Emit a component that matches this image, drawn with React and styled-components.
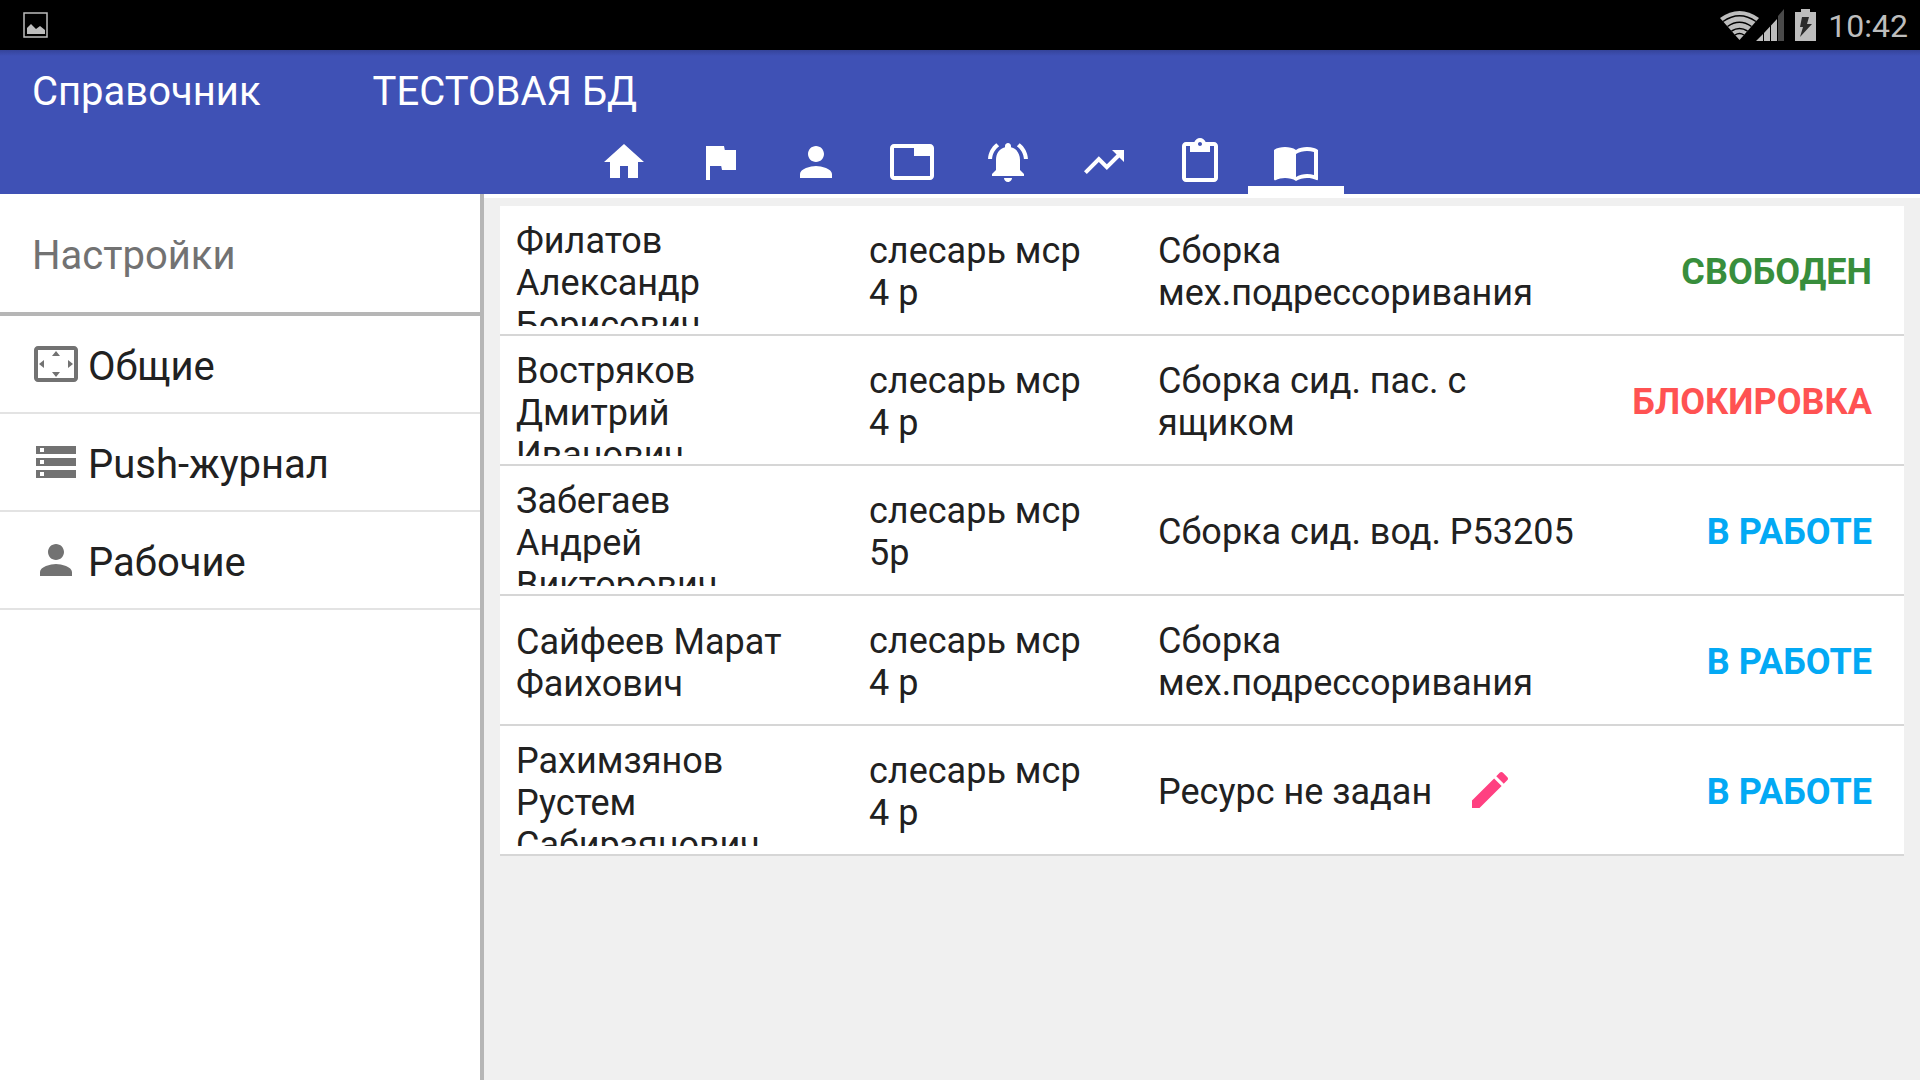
import React from 'react';
import styled, { createGlobalStyle } from 'styled-components';

const GlobalStyle = createGlobalStyle`
  * { box-sizing: border-box; }
  html, body, #root { margin: 0; height: 100%; }
  body {
    font-family: Roboto, "Noto Sans", sans-serif;
    color: #212121;
    background: #f0f0f0;
    overflow: hidden;
  }
`;

const Screen = styled.div`
  min-height: 100vh;
  display: flex;
  flex-direction: column;
`;

const StatusBar = styled.div`
  height: 50px;
  flex: none;
  display: flex;
  align-items: center;
  justify-content: space-between;
  padding: 0 12px 0 22px;
  background: #000;
  color: #bdbdbd;
`;

const StatusGroup = styled.div`
  display: flex;
  align-items: center;
`;

const Signals = styled.svg`
  display: block;
  margin-right: 10px;
`;

const Clock = styled.time`
  font-size: 32px;
  line-height: 40px;
  padding-top: 2px;
`;

const AppBar = styled.header`
  background: linear-gradient(#35449a, #3f51b5 6px);
  color: #fff;
  flex: none;
`;

const Titles = styled.div`
  display: flex;
  gap: 112px;
  height: 88px;
  padding: 18px 32px 0;
`;

const Title = styled.h1`
  margin: 0;
  font-size: 40px;
  line-height: 48px;
  font-weight: 400;
`;

const Tabs = styled.nav`
  display: flex;
  justify-content: center;
`;

const Tab = styled.button`
  width: 96px;
  padding: 0;
  border: 0;
  border-bottom: 8px solid ${(p) => (p.$active ? '#fff' : 'transparent')};
  background: none;
  color: inherit;
  display: flex;
  justify-content: center;
  cursor: pointer;
`;

const Glyph = styled.svg`
  display: block;
  width: 48px;
  height: 48px;
  flex: none;
  fill: currentColor;
`;

const Body = styled.div`
  flex: 1;
  display: flex;
`;

const Sidebar = styled.aside`
  width: 484px;
  flex: none;
  background: #fff;
  border-right: 4px solid #b6b6b6;
`;

const SidebarHeading = styled.h2`
  margin: 0;
  height: 122px;
  padding: 4px 32px 0;
  display: flex;
  align-items: center;
  border-bottom: 4px solid #b6b6b6;
  font-size: 40px;
  font-weight: 400;
  color: #727272;
`;

const SidebarItem = styled.button`
  width: 100%;
  height: 98px;
  padding: 0 32px;
  display: flex;
  align-items: center;
  gap: 8px;
  border: 0;
  border-bottom: 2px solid #e3e3e3;
  background: none;
  color: #727272;
  font: inherit;
  font-size: 40px;
  text-align: left;
  cursor: pointer;
`;

const SidebarLabel = styled.span`
  padding-top: 4px;
  color: #212121;
`;

const Main = styled.main`
  flex: 1;
  border-top: 4px solid #fff;
  padding: 8px 16px;
`;

const Table = styled.table`
  width: 100%;
  table-layout: fixed;
  border-collapse: separate;
  border-spacing: 0;
  background: #fff;
  font-size: 36px;
  line-height: 42px;
`;

const Column = styled.col`
  width: ${(p) => p.$width || 'auto'};
`;

const Cell = styled.td`
  height: 130px;
  padding: 4px 0 0;
  vertical-align: middle;
  border-bottom: 2px solid #d6d6d6;
`;

const NameCell = styled(Cell)`
  padding-left: 16px;
`;

const Name = styled.div`
  max-height: 108px;
  width: 280px;
  padding-top: 2px;
  overflow: hidden;
`;

const Role = styled.div`
  width: 240px;
`;

const Resource = styled.div`
  display: flex;
  align-items: center;
  gap: 34px;
  max-width: 430px;
`;

const EditButton = styled.button`
  padding: 0 0 4px;
  border: 0;
  background: none;
  color: #ff4081;
  cursor: pointer;
`;

const StateCell = styled(Cell)`
  padding-right: 32px;
  text-align: right;
  font-weight: 700;
  color: ${(p) => p.$color};
`;

const ICONS = {
  home: 'M10 20v-6h4v6h5v-8h3L12 3 2 12h3v8z',
  flag: 'M14.4 6L14 4H5v17h2v-7h5.6l.4 2h7V6z',
  person: 'M12 12c2.21 0 4-1.79 4-4s-1.79-4-4-4-4 1.79-4 4 1.79 4 4 4zm0 2c-2.67 0-8 1.34-8 4v2h16v-2c0-2.66-5.33-4-8-4z',
  tab: 'M21 3H3c-1.1 0-2 .9-2 2v14c0 1.1.9 2 2 2h18c1.1 0 2-.9 2-2V5c0-1.1-.9-2-2-2zm0 16H3V5h10v4h8v10z',
  bell: 'M7.58 4.08L6.15 2.65C3.75 4.48 2.17 7.3 2.03 10.5h2c.15-2.65 1.51-4.97 3.55-6.42zm12.39 6.42h2c-.15-3.2-1.73-6.02-4.12-7.85l-1.42 1.43c2.02 1.45 3.39 3.77 3.54 6.42zM18 11c0-3.07-1.64-5.64-4.5-6.32V4c0-.83-.67-1.5-1.5-1.5s-1.5.67-1.5 1.5v.68C7.63 5.36 6 7.92 6 11v5l-2 2v1h16v-1l-2-2v-5zm-6 11c.14 0 .27-.01.4-.04.65-.14 1.18-.58 1.44-1.18.1-.24.15-.5.15-.78h-4c.01 1.1.9 2 2.01 2z',
  trend: 'M16 6l2.29 2.29-4.88 4.88-4-4L2 16.59 3.41 18l6-6 4 4 6.3-6.29L22 12V6z',
  clipboard: 'M19 2h-4.18C14.4.84 13.3 0 12 0c-1.3 0-2.4.84-2.82 2H5c-1.1 0-2 .9-2 2v16c0 1.1.9 2 2 2h14c1.1 0 2-.9 2-2V4c0-1.1-.9-2-2-2zm-7 0c.55 0 1 .45 1 1s-.45 1-1 1-1-.45-1-1 .45-1 1-1zm7 18H5V4h2v3h10V4h2v16z',
  book: 'M21 5c-1.11-.35-2.33-.5-3.5-.5-1.95 0-4.05.4-5.5 1.5-1.45-1.1-3.55-1.5-5.5-1.5S2.45 4.9 1 6v14.65c0 .25.25.5.5.5.1 0 .15-.05.25-.05C3.1 20.45 5.05 20 6.5 20c1.95 0 4.05.4 5.5 1.5 1.35-.85 3.8-1.5 5.5-1.5 1.65 0 3.35.3 4.75 1.05.1.05.15.05.25.05.25 0 .5-.25.5-.5V6c-.6-.45-1.25-.75-2-1zm0 13.5c-1.1-.35-2.3-.5-3.5-.5-1.7 0-4.15.65-5.5 1.5V8c1.35-.85 3.8-1.5 5.5-1.5 1.2 0 2.4.15 3.5.5v11.5z',
  overscan: 'M12.01 5.5L10 8h4l-1.99-2.5zM18 10v4l2.5-1.99L18 10zM6 10l-2.5 2.01L6 14v-4zm8 6h-4l2.01 2.5L14 16zm7-13H3c-1.1 0-2 .9-2 2v14c0 1.1.9 2 2 2h18c1.1 0 2-.9 2-2V5c0-1.1-.9-2-2-2zm0 16.01H3V4.99h18v14.02z',
  storage: 'M2 20h20v-4H2v4zm2-3h2v2H4v-2zM2 4v4h20V4H2zm4 3H4V5h2v2zm-4 7h20v-4H2v4zm2-3h2v2H4v-2z',
  pencil: 'M3 17.25V21h3.75L17.81 9.94l-3.75-3.75L3 17.25zM20.71 7.04c.39-.39.39-1.02 0-1.41l-2.34-2.34c-.39-.39-1.02-.39-1.41 0l-1.83 1.83 3.75 3.75 1.83-1.83z',
};

const Icon = ({ name }) => (
  <Glyph viewBox="0 0 24 24" aria-hidden="true">
    <path d={ICONS[name]} />
  </Glyph>
);

const TABS = [
  ['home', 'Главная'],
  ['flag', 'Задания'],
  ['person', 'Персонал'],
  ['tab', 'Вкладки'],
  ['bell', 'Уведомления'],
  ['trend', 'Показатели'],
  ['clipboard', 'Отчёты'],
  ['book', 'Справочник'],
];

const MENU = [
  ['overscan', 'Общие'],
  ['storage', 'Push-журнал'],
  ['person', 'Рабочие'],
];

const FREE = { text: 'СВОБОДЕН', color: '#388e3c' };
const BLOCKED = { text: 'БЛОКИРОВКА', color: '#ff5252' };
const BUSY = { text: 'В РАБОТЕ', color: '#03a9f4' };

const WORKERS = [
  { name: 'Филатов Александр Борисович', role: 'слесарь мср 4 р', resource: 'Сборка мех.подрессоривания', state: FREE },
  { name: 'Востряков Дмитрий Иванович', role: 'слесарь мср 4 р', resource: 'Сборка сид. пас. с ящиком', state: BLOCKED },
  { name: 'Забегаев Андрей Викторович', role: 'слесарь мср 5р', resource: 'Сборка сид. вод. Р53205', state: BUSY },
  { name: 'Сайфеев Марат Фаихович', role: 'слесарь мср 4 р', resource: 'Сборка мех.подрессоривания', state: BUSY },
  { name: 'Рахимзянов Рустем Сабирзянович', role: 'слесарь мср 4 р', resource: null, state: BUSY },
];

export default function App() {
  return (
    <Screen>
      <GlobalStyle />
      <StatusBar>
        <svg width="28" height="30" viewBox="0 0 28 30" aria-hidden="true">
          <rect x="2" y="3" width="23" height="24" fill="none" stroke="#bdbdbd" strokeWidth="1.500" />
          <path d="M5 24v-6l4-4 5 5 4-3 5 4v4z" fill="#bdbdbd" />
        </svg>
        <StatusGroup>
          <Signals width="98" height="34" viewBox="1720 7 98 34" aria-hidden="true">
            <path d="M1739.500 39L1720 17Q1739.500 3 1759 17z" fill="#bdbdbd" />
            <path d="M1723 20.500Q1739.500 9 1756 20.500M1727.500 25.500Q1739.500 17 1751.500 25.500M1731.500 30Q1739.500 25 1747.500 30M1735 34Q1739.500 31 1744 34" fill="none" stroke="#000" strokeWidth="1.500" />
            <path d="M1756 40L1763 33V40zM1764 32L1770 25.500V40H1764zM1771 24.500L1777 18V40H1771z" fill="#bdbdbd" />
            <path d="M1778 15L1784 8V40H1778z" fill="#4a4a4a" />
            <path d="M1801 8h9v3h6v29h-21V11h6z" fill="#bdbdbd" />
            <path d="M1802 16h7l-2 7h5l-12 13 3-10h-3z" fill="#2a2a2a" />
          </Signals>
          <Clock>10:42</Clock>
        </StatusGroup>
      </StatusBar>
      <AppBar>
        <Titles>
          <Title>Справочник</Title>
          <Title as="div">ТЕСТОВАЯ БД</Title>
        </Titles>
        <Tabs>
          {TABS.map(([icon, label]) => (
            <Tab key={icon} aria-label={label} $active={icon === 'book'}>
              <Icon name={icon} />
            </Tab>
          ))}
        </Tabs>
      </AppBar>
      <Body>
        <Sidebar>
          <SidebarHeading>Настройки</SidebarHeading>
          {MENU.map(([icon, label]) => (
            <SidebarItem key={label}>
              <Icon name={icon} />
              <SidebarLabel>{label}</SidebarLabel>
            </SidebarItem>
          ))}
        </Sidebar>
        <Main>
          <Table>
            <colgroup>
              <Column $width="369px" />
              <Column $width="289px" />
              <Column />
              <Column $width="300px" />
            </colgroup>
            <tbody>
              {WORKERS.map((w) => (
                <tr key={w.name}>
                  <NameCell>
                    <Name>{w.name}</Name>
                  </NameCell>
                  <Cell>
                    <Role>{w.role}</Role>
                  </Cell>
                  <Cell>
                    <Resource>
                      {w.resource || 'Ресурс не задан'}
                      {!w.resource && (
                        <EditButton aria-label="Изменить">
                          <Icon name="pencil" />
                        </EditButton>
                      )}
                    </Resource>
                  </Cell>
                  <StateCell $color={w.state.color}>{w.state.text}</StateCell>
                </tr>
              ))}
            </tbody>
          </Table>
        </Main>
      </Body>
    </Screen>
  );
}
